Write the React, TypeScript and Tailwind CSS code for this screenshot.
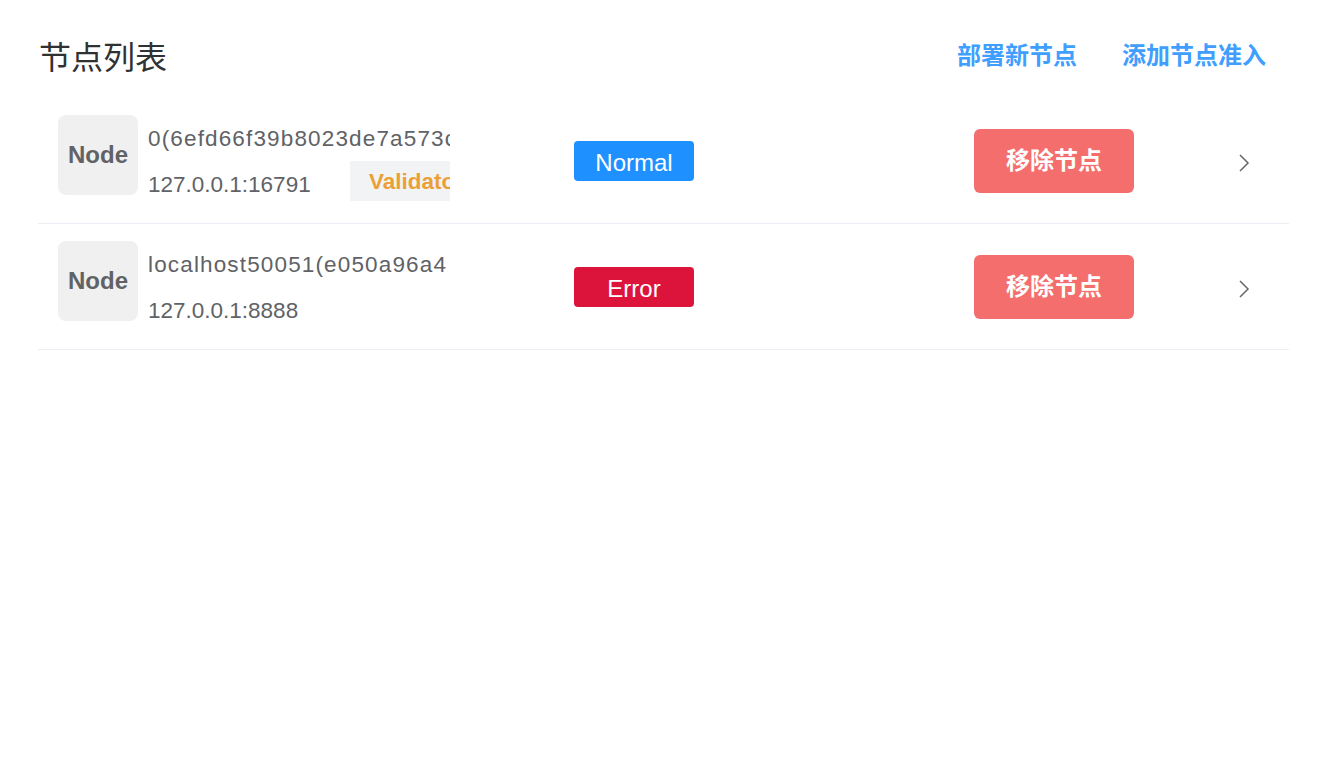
import React from 'react';

const FONT = '"Liberation Sans", "Noto Sans CJK SC", sans-serif';

const NODES = [
  { id: 1, name: "0(6efd66f39b8023de7a573c1f4d", addr: "127.0.0.1:16791", role: "Validator", status: "Normal" },
  { id: 2, name: "localhost50051(e050a96a4", addr: "127.0.0.1:8888", role: "", status: "Error" },
];

function Chevron() {
  return (
    <svg width="12" height="20" viewBox="0 0 12 20" fill="none">
      <polyline points="2,2 10,10 2,18" stroke="#666" strokeWidth="1.5" fill="none" />
    </svg>
  );
}

function NodeRow({ node }: { node: typeof NODES[number] }) {
  return (
    <div className="flex items-center pt-[17px] pb-[16px] border-b border-[#ebeef5]">
      <div className="self-start ml-[20px] w-[80px] h-[80px] rounded-lg bg-[#f0f0f0] flex items-center justify-center text-[24px] font-bold text-[#606266]">
        Node
      </div>
      <div className="ml-[10px] w-[302px] overflow-hidden text-[22.5px] text-[#606266]">
        <div className="h-[46px] leading-[48px] whitespace-nowrap tracking-[1.15px]">{node.name}</div>
        <div className="h-[46px] flex items-start">
          <span className="leading-[48px] w-[202px] whitespace-nowrap">{node.addr}</span>
          {node.role && (
            <span className="h-[40px] w-[100px] bg-[#f2f3f5] leading-[42px] pl-[19px] whitespace-nowrap overflow-hidden font-bold text-[#eba035]">
              {node.role}
            </span>
          )}
        </div>
      </div>
      <div
        className={`ml-[124px] w-[120px] h-[40px] pt-[4px] rounded-[4px] flex items-center justify-center text-[24px] text-white ${
          node.status === "Normal" ? "bg-[#1e90ff]" : "bg-[#dc143c]"
        }`}
      >
        {node.status}
      </div>
      <button className="ml-[280px] w-[160px] h-[64px] rounded-md bg-[#f56e6e] text-white text-[24px] font-bold">
        移除节点
      </button>
      <div className="ml-[104px] mt-[4px] flex items-center">
        <Chevron />
      </div>
    </div>
  );
}

export default function App() {
  return (
    <div className="min-h-screen bg-white" style={{ fontFamily: FONT }}>
      <div className="pl-[38px] pr-[39px] pt-[36px]">
        <div className="flex items-center justify-between h-[40px] mb-[22px]">
          <h1 className="text-[32px] text-[#303133] ml-[1px] mt-[4px]">节点列表</h1>
          <div className="flex items-center gap-[45px] mr-[23px] text-[24px] font-bold text-[#409eff]">
            <span>部署新节点</span>
            <span>添加节点准入</span>
          </div>
        </div>
        <div>
          {NODES.map((n) => (
            <NodeRow key={n.id} node={n} />
          ))}
        </div>
      </div>
    </div>
  );
}
